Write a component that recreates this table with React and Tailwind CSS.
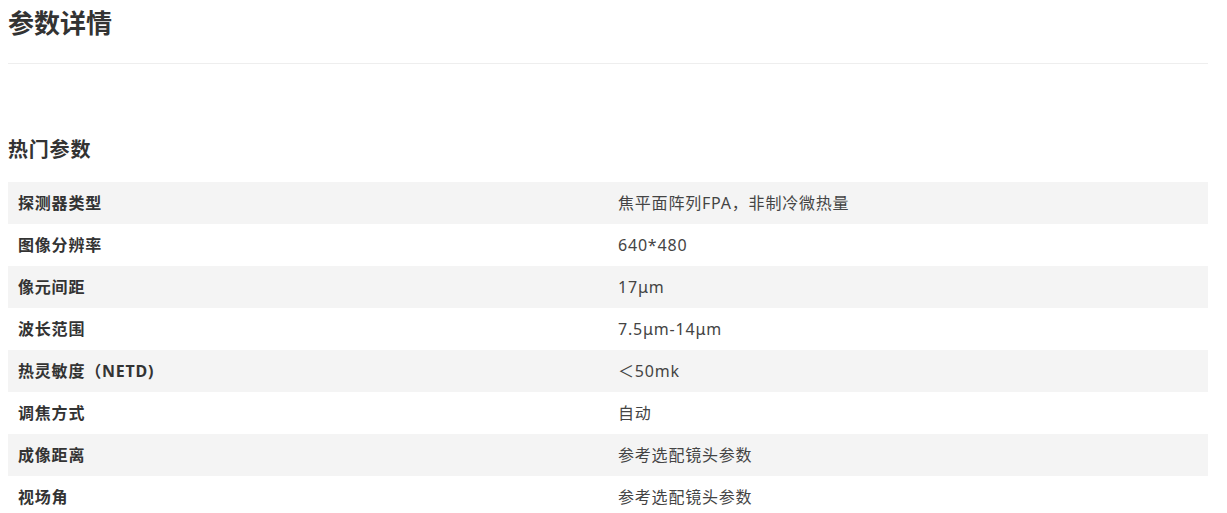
const rows = [
  ['探测器类型', '焦平面阵列FPA，非制冷微热量'],
  ['图像分辨率', '640*480'],
  ['像元间距', '17μm'],
  ['波长范围', '7.5μm-14μm'],
  ['热灵敏度（NETD)', '＜50mk'],
  ['调焦方式', '自动'],
  ['成像距离', '参考选配镜头参数'],
  ['视场角', '参考选配镜头参数'],
];

export default function App() {
  return (
    <div className="w-[1200px] ml-2 text-[#333] font-['Noto_Sans','Noto_Sans_CJK_SC',sans-serif]">
      <div className="h-[64px] border-b border-[#eeeeee] pt-[3px]">
        <h2 className="text-[26px] leading-[40px] font-bold text-[#333]">参数详情</h2>
      </div>

      <h3 className="mt-[71px] text-[20px] leading-[30px] tracking-[0.8px] font-bold text-[#333]">热门参数</h3>

      <table className="mt-[17px] w-full border-collapse">
        <tbody>
          {rows.map(([k, v], i) => (
            <tr key={k} className={i % 2 === 0 ? 'bg-[#f4f4f4]' : 'bg-white'}>
              <td className="w-1/2 h-[42px] px-[10px] text-[16px] tracking-[0.8px] font-bold text-[#333]">{k}</td>
              <td className="w-1/2 h-[42px] px-[10px] text-[16px] tracking-[0.8px] text-[#444]">{v}</td>
            </tr>
          ))}
        </tbody>
      </table>
    </div>
  );
}
